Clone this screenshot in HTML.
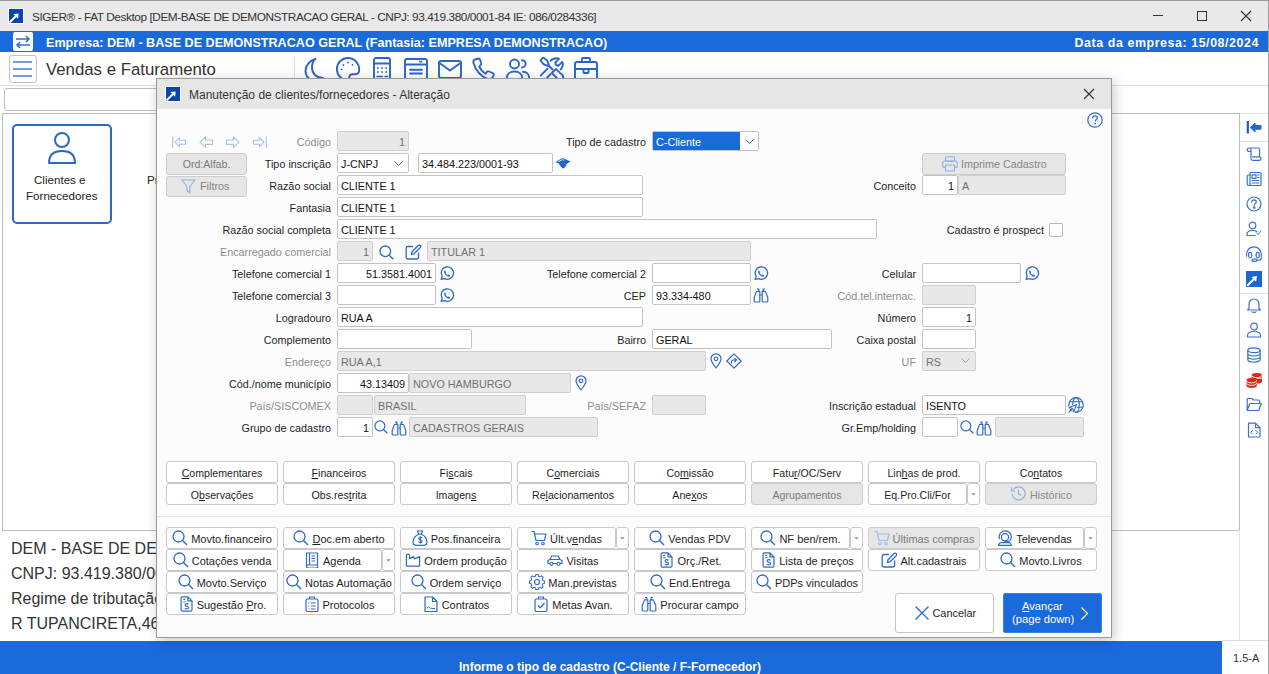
<!DOCTYPE html><html><head><meta charset="utf-8"><style>
*{box-sizing:border-box;margin:0;padding:0}
html,body{width:1269px;height:674px;overflow:hidden;background:#fff;font-family:"Liberation Sans",sans-serif;color:#222;position:relative}
div,svg{position:absolute}
.t{white-space:nowrap;line-height:1}
.ic{overflow:visible}
.inp{border:1px solid #c3c3c3;border-radius:2px;background:#fff;font-size:10.8px;line-height:20px;padding:0 3px;white-space:nowrap;overflow:hidden;color:#111}
.dis{background:#e8e8e8;color:#707070;border-color:#cfcfcf}
.r{text-align:right}
.lb{font-size:10.8px;white-space:nowrap;line-height:20px;height:20px;color:#1e1e1e}
.lbd{color:#8c8c8c}
.btn{border:1px solid #c9c9c9;border-radius:3px;background:#fff;font-size:10.6px;line-height:21px;text-align:center;white-space:nowrap;color:#1e1e1e}
.btng{background:#e6e6e6;color:#7a7a7a;border-color:#cdcdcd}

.gb{display:flex;align-items:center;justify-content:center;gap:3px;font-size:11px}
.gb span{position:relative;top:1.5px}
u{text-decoration:underline;text-underline-offset:1px}
</style></head><body><div class="" style="left:0px;top:0px;width:1269px;height:31px;background:#e9e9e9;border-top:1px solid #9c9c9c"></div>
<div class="" style="left:8px;top:8px;width:16px;height:16px;background:#0c43b0;border:1px solid #fff"></div>
<svg class="ic" style="left:8px;top:8px;" width="16" height="16" viewBox="0 0 16 16" fill="none"><path d="M1.5 14.5 L8 8" stroke="#fff" stroke-width="2"/><path d="M5.3 5.9 L10.6 5.4 L10.1 10.7 Z" fill="#fff"/></svg>
<div class="t" style="left:32px;top:11.6px;font-size:11.8px;color:#333;letter-spacing:-0.42px">SIGER® - FAT Desktop [DEM-BASE DE DEMONSTRACAO GERAL - CNPJ: 93.419.380/0001-84 IE: 086/0284336]</div>
<div class="" style="left:1153px;top:15px;width:10px;height:1px;background:#333"></div>
<div class="" style="left:1197px;top:11px;width:10px;height:10px;border:1px solid #333"></div>
<svg class="ic" style="left:1241px;top:11px;" width="10" height="10" viewBox="0 0 10 10" fill="none"><path d="M0 0 L10 10 M10 0 L0 10" stroke="#333" stroke-width="1.1"/></svg>
<div class="" style="left:0px;top:31px;width:1268px;height:21px;background:#1b6adc"></div>
<div class="" style="left:13px;top:32px;width:20px;height:19px;background:#fff;border-radius:2px"></div>
<svg class="ic" style="left:13px;top:32px;" width="20" height="20" viewBox="0 0 20 20" fill="none"><path d="M3 7 H16 M13 4 L16 7 L13 10 M17 13 H4 M7 10 L4 13 L7 16" stroke="#2f6fd0" stroke-width="1.5"/></svg>
<div class="t" style="left:46px;top:37px;font-size:12.6px;font-weight:bold;color:#fff">Empresa: DEM - BASE DE DEMONSTRACAO GERAL (Fantasia: EMPRESA DEMONSTRACAO)</div>
<div class="t" style="right:10px;top:37px;font-size:12.4px;font-weight:bold;color:#fff;letter-spacing:0.58px">Data da empresa: 15/08/2024</div>
<div class="" style="left:1268px;top:0px;width:1px;height:674px;background:#a0a0a0"></div>
<div class="" style="left:9px;top:55px;width:28px;height:28px;border:1px solid #c2c2c2;border-radius:3px;background:#fff"></div>
<svg class="ic" style="left:13px;top:61px;" width="20" height="16" viewBox="0 0 20 16" fill="none"><path d="M0 1 H19 M0 8 H19 M0 15 H19" stroke="#4b7dd0" stroke-width="1.6"/></svg>
<div class="t" style="left:46px;top:62px;font-size:16.8px;color:#333">Vendas e Faturamento</div>
<div class="" style="left:294px;top:56px;width:1px;height:22px;background:#dcdcdc"></div>
<div class="" style="left:0px;top:85px;width:1268px;height:1px;background:#dedede"></div>
<div class="" style="left:4px;top:88px;width:1000px;height:23px;border:1px solid #bdbdbd;border-radius:3px;background:#fff"></div>
<div class="" style="left:2px;top:113px;width:1238px;height:418px;border:1px solid #bdbdbd;background:#fff"></div>
<div class="" style="left:12px;top:124px;width:100px;height:100px;border:2px solid #2b67c9;border-radius:5px"></div>
<svg class="ic" style="left:44px;top:131px;" width="36" height="36" viewBox="0 0 36 36" fill="none"><circle cx="18" cy="9" r="7" stroke="#2b67c9" stroke-width="2"/><path d="M5 32 C5 24 10 20 18 20 C26 20 31 24 31 32 Z" stroke="#2b67c9" stroke-width="2" stroke-linejoin="round"/></svg>
<div class="t" style="left:34px;top:174px;font-size:11.6px;color:#222">Clientes e</div>
<div class="t" style="left:26px;top:190px;font-size:11.6px;color:#222">Fornecedores</div>
<div class="t" style="left:147px;top:174px;font-size:11.6px;color:#222">Produtos</div>
<div class="" style="left:1240px;top:113px;width:28px;height:528px;background:#fff"></div>
<div class="" style="left:1239px;top:530px;width:1px;height:111px;background:#e4e4e4"></div>
<div class="" style="left:1240px;top:113px;width:28px;height:1px;background:#e4e4e4"></div>
<div class="" style="left:1240px;top:141px;width:28px;height:1px;background:#e2e2e2"></div>
<div class="" style="left:1240px;top:293px;width:28px;height:1px;background:#e2e2e2"></div>
<div class="t" style="left:11px;top:541.0px;font-size:16px;color:#333">DEM - BASE DE DEMONSTRACAO GERAL</div>
<div class="t" style="left:11px;top:565.95px;font-size:16px;color:#333">CNPJ: 93.419.380/0001-84</div>
<div class="t" style="left:11px;top:590.9px;font-size:16px;color:#333">Regime de tributação: Lucro Presumido</div>
<div class="t" style="left:11px;top:615.85px;font-size:16px;color:#333">R TUPANCIRETA,46</div>
<div class="" style="left:0px;top:641px;width:1222px;height:33px;background:#1b6adc"></div>
<div class="t" style="left:459px;top:661px;font-size:12px;font-weight:bold;color:#fff">Informe o tipo de cadastro (C-Cliente / F-Fornecedor)</div>
<div class="" style="left:1222px;top:640px;width:46px;height:34px;border-top:1px solid #dcdcdc;background:#fff"></div>
<div class="t" style="left:1233px;top:653px;font-size:11px;color:#333">1.5-A</div>
<svg class="ic" style="left:304px;top:57px" width="24" height="24" viewBox="0 0 24 24" fill="none" stroke="#2c65c8" stroke-width="1.9" stroke-linejoin="round" stroke-linecap="round"><path d="M11.5 2 C6 3.5 1.5 8 1.5 14 C1.5 20 6.5 24.5 12 24.5 C15.5 24.5 18 23 19 21 C12.5 21 8 16.5 8 10.5 C8 6.5 9.5 3.5 11.5 2 Z"/></svg>
<svg class="ic" style="left:336px;top:57px" width="24" height="24" viewBox="0 0 24 24" fill="none" stroke="#2c65c8" stroke-width="1.9" stroke-linejoin="round" stroke-linecap="round"><path d="M12 1 C5.8 1 0.9 5.8 0.9 12 C0.9 18 5.5 23 11 23.5 C12.8 23.6 13.2 22.4 13.2 20.8 C13.2 18.6 14.3 17.2 16.6 17.2 H19.4 C21.9 17.2 23.2 15.6 23.2 12.8 C23.2 6.2 18.2 1 12 1 Z"/><circle cx="12" cy="5.5" r="0.9" fill="#2c65c8" stroke="none"/><circle cx="7.4" cy="7.9" r="0.9" fill="#2c65c8" stroke="none"/><circle cx="16.5" cy="7.9" r="0.9" fill="#2c65c8" stroke="none"/><circle cx="5.7" cy="12.3" r="0.9" fill="#2c65c8" stroke="none"/></svg>
<svg class="ic" style="left:373px;top:57px" width="18" height="24" viewBox="0 0 18 24" fill="none" stroke="#2c65c8" stroke-width="1.9" stroke-linejoin="round" stroke-linecap="round"><rect x="1" y="1" width="16" height="23" rx="2"/><path d="M1 6.5 H17"/><g fill="#2c65c8" stroke="none"><circle cx="4.8" cy="11" r="0.9"/><circle cx="9" cy="11" r="0.9"/><circle cx="13.2" cy="11" r="0.9"/><circle cx="4.8" cy="15" r="0.9"/><circle cx="9" cy="15" r="0.9"/><circle cx="13.2" cy="15" r="0.9"/></g><path d="M4 19.5 H9.5 M12 19.5 H14.5" stroke-width="1.5"/></svg>
<svg class="ic" style="left:404px;top:57px" width="24" height="24" viewBox="0 0 24 24" fill="none" stroke="#2c65c8" stroke-width="1.9" stroke-linejoin="round" stroke-linecap="round"><rect x="1" y="2" width="22" height="21" rx="2"/><path d="M1 7.5 H23 M6 12.8 H18 M6 16.5 H18"/><path d="M15.5 4.2 L16.8 5.2 L18 4.2" stroke-width="1.3"/></svg>
<svg class="ic" style="left:438px;top:57px" width="24" height="24" viewBox="0 0 24 24" fill="none" stroke="#2c65c8" stroke-width="1.9" stroke-linejoin="round" stroke-linecap="round"><rect x="1" y="4" width="22" height="17" rx="2"/><path d="M1.5 6 L12 13.5 L22.5 6"/></svg>
<svg class="ic" style="left:472px;top:57px" width="24" height="24" viewBox="0 0 24 24" fill="none" stroke="#2c65c8" stroke-width="1.9" stroke-linejoin="round" stroke-linecap="round"><path d="M6.5 1.5 L3 2.5 C1.5 3 1 4.5 1.5 6 C3.5 13 9 19.5 16.5 22.5 C18 23 19.5 22.5 20 21 L21.5 18.5 C22 17.5 21.5 16.5 20.5 16 L17 14.5 C16 14 15 14.5 14.5 15.5 L13.5 16.8 C10.5 15 8.5 12.5 7.2 9.5 L8.5 8.3 C9.3 7.5 9.5 6.5 9 5.5 L8 2.5 C7.7 1.8 7.2 1.4 6.5 1.5 Z"/></svg>
<svg class="ic" style="left:506px;top:57px" width="24" height="24" viewBox="0 0 24 24" fill="none" stroke="#2c65c8" stroke-width="1.9" stroke-linejoin="round" stroke-linecap="round"><circle cx="8.5" cy="7" r="4.5"/><path d="M16 3.2 A3.6 3.6 0 1 1 16 10.5"/><path d="M1 22 V20.5 C1 17 4 14.5 8.5 14.5 C13 14.5 16 17 16 20.5 V22 Z"/><path d="M17 14.8 C20.5 15 23 17.3 23 20.5 V22 H19"/></svg>
<svg class="ic" style="left:540px;top:57px" width="24" height="24" viewBox="0 0 24 24" fill="none" stroke="#2c65c8" stroke-width="1.9" stroke-linejoin="round" stroke-linecap="round"><path d="M0.8 2.8 L2.8 0.8 Q3.3 0.4 4 0.9 L7.2 3.5 L8.8 7.6 L7.6 8.8 L3.5 7.2 L0.9 4 Q0.4 3.3 0.8 2.8 Z"/><path d="M8.5 8.5 L12.5 12.5"/><path d="M11.8 16 L16 11.8 L22.6 18.4 A3 3 0 0 1 18.4 22.6 Z"/><path d="M10.6 3.8 C12.5 1.6 17 0.6 19 1.8 L15.3 5.5 C15.3 7.5 16.5 8.7 18.5 8.7 L22.3 4.9 C23.5 7 22.6 10.8 20.6 12.4"/><path d="M7.6 11.6 L0.8 18.4 M10.6 17.1 L7.2 20.5"/></svg>
<svg class="ic" style="left:574px;top:57px" width="24" height="24" viewBox="0 0 24 24" fill="none" stroke="#2c65c8" stroke-width="1.9" stroke-linejoin="round" stroke-linecap="round"><rect x="1" y="5" width="22" height="18" rx="2"/><path d="M8 5 V2 A1 1 0 0 1 9 1 H15 A1 1 0 0 1 16 2 V5 M1 12 H23"/><rect x="9.5" y="12" width="5" height="4" rx="0.5"/></svg>
<svg class="ic" style="left:1246px;top:120px" width="16" height="15" viewBox="0 0 16 15" fill="none" stroke="#3a70cc" stroke-width="1.2" stroke-linejoin="round" stroke-linecap="round"><path d="M1.8 1 V13.5" stroke="#1f5bc4" stroke-width="2.2" stroke-linecap="butt"/><path d="M4.5 7.3 L9 3 V5.5 H15 V9.2 H9 V11.6 Z" fill="#2166d4" stroke="#2166d4" stroke-width="1"/></svg>
<svg class="ic" style="left:1246px;top:146px" width="16" height="16" viewBox="0 0 16 16" fill="none" stroke="#3a70cc" stroke-width="1.2" stroke-linejoin="round" stroke-linecap="round"><path d="M3.5 2 H12 C13 2 13.5 2.7 13.5 3.5 V10.5 M3.5 2 C2 2 1.2 2.8 1.2 3.8 C1.2 4.8 2 5.5 3.5 5.5 H5 V12.5 C5 13.5 5.8 14.3 6.8 14.3 H13.5 C14.5 14.3 15 13.5 15 12.6 C15 11.6 14.5 10.8 13.5 10.8 H6.5 M3.5 2 C4.5 2 5 2.8 5 3.8 V5.5"/></svg>
<svg class="ic" style="left:1246px;top:171px" width="16" height="16" viewBox="0 0 16 16" fill="none" stroke="#3a70cc" stroke-width="1.2" stroke-linejoin="round" stroke-linecap="round"><rect x="4" y="1.5" width="11" height="13" rx="1"/><path d="M4 4 H2.5 C1.7 4 1.2 4.5 1.2 5.3 V13 C1.2 13.9 1.9 14.5 2.7 14.5 H5"/><rect x="6" y="3.8" width="4" height="3.5"/><path d="M11.5 4 H13 M11.5 6.5 H13 M6 9.5 H13 M6 12 H13"/></svg>
<svg class="ic" style="left:1246px;top:196px" width="16" height="16" viewBox="0 0 16 16" fill="none" stroke="#3a70cc" stroke-width="1.2" stroke-linejoin="round" stroke-linecap="round"><circle cx="8" cy="8" r="7"/><path d="M5.7 6.2 C5.7 4.7 6.8 3.9 8 3.9 C9.3 3.9 10.3 4.8 10.3 6 C10.3 7.4 8.2 7.6 8.2 9.3"/><circle cx="8.2" cy="11.6" r="0.7" fill="#3a70cc"/></svg>
<svg class="ic" style="left:1246px;top:221px" width="16" height="16" viewBox="0 0 16 16" fill="none" stroke="#3a70cc" stroke-width="1.2" stroke-linejoin="round" stroke-linecap="round"><circle cx="6.5" cy="4.5" r="3.3"/><path d="M1 14.5 V13.5 C1 11 3 9.5 6.5 9.5 C8.5 9.5 10 10 11 10.8 M1 14.5 H9"/><path d="M10.5 12 L12 13.5 L15 10" stroke-width="1"/></svg>
<svg class="ic" style="left:1246px;top:246px" width="16" height="16" viewBox="0 0 16 16" fill="none" stroke="#3a70cc" stroke-width="1.2" stroke-linejoin="round" stroke-linecap="round"><path d="M0.6 10.2 V8.2 A7.2 7.2 0 0 1 15.2 8.2 V12.2 Q15.2 14.2 13.6 14.2 H10.8"/><rect x="2.6" y="6.3" width="3" height="5.5" rx="1.5"/><rect x="10.2" y="6.3" width="3" height="5.5" rx="1.5"/><rect x="6" y="13.1" width="4.8" height="2.2" rx="1.1"/></svg>
<div style="left:1246px;top:271px;width:16px;height:16px;background:#1d64d6"></div>
<svg class="ic" style="left:1246px;top:271px" width="16" height="16" viewBox="0 0 16 16" fill="none" stroke="#3a70cc" stroke-width="1.2" stroke-linejoin="round" stroke-linecap="round"><path d="M1.2 14.8 L8 8" stroke="#fff" stroke-width="2" stroke-linecap="butt"/><path d="M5.3 5.9 L11 5 L10.1 10.7 Z" fill="#fff" stroke="none"/></svg>
<svg class="ic" style="left:1246px;top:297px" width="16" height="16" viewBox="0 0 16 16" fill="none" stroke="#3a70cc" stroke-width="1.2" stroke-linejoin="round" stroke-linecap="round"><path d="M3 11.5 V7 A5 5 0 0 1 13 7 V11.5 L14.5 13 H1.5 Z"/><path d="M6 14.8 C6.5 15.6 9.5 15.6 10 14.8"/></svg>
<svg class="ic" style="left:1246px;top:322px" width="16" height="16" viewBox="0 0 16 16" fill="none" stroke="#3a70cc" stroke-width="1.2" stroke-linejoin="round" stroke-linecap="round"><circle cx="8" cy="4.5" r="3.3"/><path d="M1.5 15 V13.8 C1.5 11.3 4 9.5 8 9.5 C12 9.5 14.5 11.3 14.5 13.8 V15 Z"/></svg>
<svg class="ic" style="left:1246px;top:347px" width="16" height="16" viewBox="0 0 16 16" fill="none" stroke="#3a70cc" stroke-width="1.2" stroke-linejoin="round" stroke-linecap="round"><ellipse cx="8" cy="3.3" rx="6.2" ry="2.4"/><path d="M1.8 3.3 V12.7 C1.8 14 4.6 15.1 8 15.1 C11.4 15.1 14.2 14 14.2 12.7 V3.3 M1.8 6.6 C1.8 7.9 4.6 9 8 9 C11.4 9 14.2 7.9 14.2 6.6 M1.8 9.8 C1.8 11.1 4.6 12.2 8 12.2 C11.4 12.2 14.2 11.1 14.2 9.8"/></svg>
<svg class="ic" style="left:1246px;top:371px" width="16" height="17" viewBox="0 0 16 17" fill="none" stroke="#3a70cc" stroke-width="1.2" stroke-linejoin="round" stroke-linecap="round"><g stroke="none" fill="#d42a1e"><path d="M5.6 4.2 A5.2 2.3 0 0 1 16 4.2 V10.2 A5.2 2.3 0 0 1 5.6 10.2 Z"/><path d="M0.4 9.4 A5.2 2.3 0 0 1 10.8 9.4 V14.6 A5.2 2.3 0 0 1 0.4 14.6 Z"/></g><g stroke="#fff" stroke-width="0.9" fill="none"><path d="M5.6 4.4 A5.2 2.3 0 0 0 16 4.4 M10.8 7.2 A5.2 2.3 0 0 0 16 7.1 M0.4 9.6 A5.2 2.3 0 0 0 10.8 9.6 M0.4 12.1 A5.2 2.3 0 0 0 10.8 12.1"/><path d="M10.2 7.6 A5.2 2.3 0 0 0 5.6 7.2" stroke="none"/></g></svg>
<svg class="ic" style="left:1246px;top:397px" width="16" height="15" viewBox="0 0 16 15" fill="none" stroke="#3a70cc" stroke-width="1.2" stroke-linejoin="round" stroke-linecap="round"><path d="M1.2 13.5 V2.5 C1.2 1.9 1.6 1.5 2.2 1.5 H6 L7.5 3 H12.5 C13.1 3 13.5 3.4 13.5 4 V6 M1.2 13.5 L3.8 6.5 H15.3 L12.8 13.5 Z"/></svg>
<svg class="ic" style="left:1246px;top:422px" width="16" height="16" viewBox="0 0 16 16" fill="none" stroke="#3a70cc" stroke-width="1.2" stroke-linejoin="round" stroke-linecap="round"><path d="M2.5 1.2 H9.5 L14 5.7 V15 H2.5 Z M9.5 1.2 V5.7 H14"/><path d="M6.5 8.5 L4.8 10.3 L6.5 12 M10 8.5 L11.7 10.3 L10 12" stroke-width="1"/></svg>
<div class="" style="left:156px;top:78px;width:956px;height:560px;border:1px solid #9a9a9a;background:#fcfcfc;box-shadow:2px 3px 12px rgba(0,0,0,0.22)"></div>
<div class="" style="left:157px;top:79px;width:954px;height:30px;background:#e6e6e6"></div>
<div class="" style="left:165px;top:86px;width:16px;height:16px;background:#0c43b0;border:1px solid #fff"></div>
<svg class="ic" style="left:165px;top:86px;" width="16" height="16" viewBox="0 0 16 16" fill="none"><path d="M1.5 14.5 L8 8" stroke="#fff" stroke-width="2"/><path d="M5.3 5.9 L10.6 5.4 L10.1 10.7 Z" fill="#fff"/></svg>
<div class="t" style="left:189px;top:89px;font-size:12px;color:#333">Manutenção de clientes/fornecedores - Alteração</div>
<svg class="ic" style="left:1084px;top:89px;" width="10" height="10" viewBox="0 0 10 10" fill="none"><path d="M0 0 L10 10 M10 0 L0 10" stroke="#333" stroke-width="1.1"/></svg>
<svg class="ic" style="left:1087px;top:112px;" width="16" height="16" viewBox="0 0 16 16" fill="none"><circle cx="8" cy="8" r="7.2" stroke="#2f69c9" stroke-width="1.2"/><path d="M5.6 6.2 C5.6 4.6 6.7 3.8 8 3.8 C9.4 3.8 10.4 4.7 10.4 5.9 C10.4 7.4 8.2 7.6 8.2 9.4" stroke="#2f69c9" stroke-width="1.3"/><circle cx="8.2" cy="11.6" r="0.9" fill="#2f69c9"/></svg>
<svg class="ic" style="left:172px;top:136px;" width="14" height="12" viewBox="0 0 14 12" fill="none"><path d="M0.7 0.5 V12" stroke="#a9c1e6" stroke-width="1.1"/><path d="M3 6.2 L7.5 1.8 V4.2 H13.5 V8.2 H7.5 V10.6 Z" stroke="#a9c1e6" stroke-width="1.1" stroke-linejoin="round"/></svg>
<svg class="ic" style="left:199px;top:136px;" width="14" height="12" viewBox="0 0 14 12" fill="none"><path d="M1 6.2 L6.5 1 V4 H13.5 V8.4 H6.5 V11.4 Z" stroke="#a9c1e6" stroke-width="1.1" stroke-linejoin="round"/></svg>
<svg class="ic" style="left:226px;top:136px;" width="14" height="12" viewBox="0 0 14 12" fill="none"><path d="M13 6.2 L7.5 1 V4 H0.5 V8.4 H7.5 V11.4 Z" stroke="#a9c1e6" stroke-width="1.1" stroke-linejoin="round"/></svg>
<svg class="ic" style="left:253px;top:136px;" width="14" height="12" viewBox="0 0 14 12" fill="none"><path d="M13.3 0.5 V12" stroke="#a9c1e6" stroke-width="1.1"/><path d="M11 6.2 L6.5 1.8 V4.2 H0.5 V8.2 H6.5 V10.6 Z" stroke="#a9c1e6" stroke-width="1.1" stroke-linejoin="round"/></svg>
<div class="lb lbd" style="right:938px;top:132px">Código</div>
<div class="inp dis r" style="left:337px;top:131px;width:72px;height:20px;">1</div>
<div class="lb" style="right:623px;top:132px">Tipo de cadastro</div>
<div class="inp" style="left:652px;top:131px;width:107px;height:20px;padding:0"></div>
<div class="" style="left:653px;top:132px;width:87px;height:18px;background:#1b6adc;color:#fff;font-size:10.8px;line-height:20px;padding-left:3px">C-Cliente</div>
<svg class="ic" style="left:745px;top:139px;" width="9" height="5" viewBox="0 0 9 5" fill="none"><path d="M0.5 0.5 L4.5 4.5 L8.5 0.5" stroke="#555" stroke-width="1"/></svg>
<div class="lb" style="right:938px;top:154px">Tipo inscrição</div>
<div class="inp" style="left:337px;top:153px;width:72px;height:20px;">J-CNPJ</div>
<svg class="ic" style="left:394px;top:161px;" width="9" height="5" viewBox="0 0 9 5" fill="none"><path d="M0.5 0.5 L4.5 4.5 L8.5 0.5" stroke="#555" stroke-width="1"/></svg>
<div class="inp" style="left:418px;top:153px;width:135px;height:20px;">34.484.223/0001-93</div>
<svg class="ic" style="left:555px;top:157px;" width="16" height="12" viewBox="0 0 16 12" fill="none"><path d="M0.5 5 L6.5 1.5 Q7.5 0.8 8.8 1.4 L15.5 4.6 L10.8 7.4 L7.8 5.8 L5.2 7.2 Z" fill="#1d60d2"/><path d="M4 7.2 L7.8 5.8 L11.8 8 L8.8 11.2 Q8 11.6 7.2 11 Z" fill="#1d60d2"/><path d="M3.2 4.6 L7.6 2.6 L9.2 3.4" stroke="#fff" stroke-width="0.9"/></svg>
<div class="btn btng" style="left:922px;top:153px;width:144px;height:22px;"></div>
<svg class="ic" style="left:942px;top:156px;" width="16" height="16" viewBox="0 0 16 16" fill="none"><rect x="3.5" y="0.8" width="9" height="4.5" rx="1" stroke="#8fb0e0" stroke-width="1.1"/><rect x="0.8" y="5" width="14.4" height="6.5" rx="1.3" stroke="#8fb0e0" stroke-width="1.1"/><rect x="3.5" y="9" width="9" height="6" rx="0.8" stroke="#8fb0e0" stroke-width="1.1" fill="#e6e6e6"/></svg>
<div class="t" style="left:961px;top:159px;font-size:10.8px;color:#858585">Imprime Cadastro</div>
<div class="btn btng" style="left:166px;top:153px;width:81px;height:22px;">Ord:Alfab.</div>
<div class="btn btng" style="left:166px;top:176px;width:81px;height:21px;"></div>
<svg class="ic" style="left:181px;top:179px;" width="15" height="15" viewBox="0 0 15 15" fill="none"><path d="M0.8 1 H14 L8.8 7.5 V14 L6 11.8 V7.5 Z" stroke="#8fb0e0" stroke-width="1.1" stroke-linejoin="round"/></svg>
<div class="t" style="left:200px;top:181px;font-size:10.8px;color:#858585">Filtros</div>
<div class="lb" style="right:938px;top:176px">Razão social</div>
<div class="inp" style="left:337px;top:175px;width:306px;height:20px;">CLIENTE 1</div>
<div class="lb" style="right:353px;top:176px">Conceito</div>
<div class="inp r" style="left:922px;top:175px;width:36px;height:20px;">1</div>
<div class="inp dis" style="left:958px;top:175px;width:108px;height:20px;">A</div>
<div class="lb" style="right:938px;top:198px">Fantasia</div>
<div class="inp" style="left:337px;top:197px;width:306px;height:20px;">CLIENTE 1</div>
<div class="lb" style="right:938px;top:220px">Razão social completa</div>
<div class="inp" style="left:337px;top:219px;width:540px;height:20px;">CLIENTE 1</div>
<div class="lb" style="right:225px;top:220px">Cadastro é prospect</div>
<div class="" style="left:1049px;top:223px;width:14px;height:14px;border:1px solid #b9b9b9;border-radius:2px;background:#fff"></div>
<div class="lb lbd" style="right:938px;top:242px">Encarregado comercial</div>
<div class="inp dis r" style="left:337px;top:241px;width:36px;height:20px;">1</div>
<svg class="ic" style="left:379px;top:245px;" width="15" height="15" viewBox="0 0 15 15" fill="none"><circle cx="6.3" cy="6.3" r="5.3" stroke="#2f69c9" stroke-width="1.3"/><path d="M10.2 10.2 L14.3 14.3" stroke="#2f69c9" stroke-width="1.4"/></svg>
<svg class="ic" style="left:405px;top:244px;" width="17" height="16" viewBox="0 0 17 16" fill="none"><path d="M8 2.5 H3 A1.8 1.8 0 0 0 1.2 4.3 V13.2 A1.8 1.8 0 0 0 3 15 H11.8 A1.8 1.8 0 0 0 13.6 13.2 V8.5" stroke="#2f69c9" stroke-width="1.3"/><path d="M6.5 10.3 L7 7.7 L13.2 1.5 A1.3 1.3 0 0 1 15.3 3.6 L9.1 9.8 Z" stroke="#2f69c9" stroke-width="1.3" stroke-linejoin="round"/></svg>
<div class="inp dis" style="left:427px;top:241px;width:324px;height:20px;">TITULAR 1</div>
<div class="lb" style="right:938px;top:264px">Telefone comercial 1</div>
<div class="inp r" style="left:337px;top:263px;width:99px;height:20px;">51.3581.4001</div>
<svg class="ic" style="left:439px;top:266px;" width="15" height="15" viewBox="0 0 15 15" fill="none"><path d="M2.2 13.3 L3.1 10.3 A6.2 6.2 0 1 1 5.6 12.6 Z" stroke="#2f69c9" stroke-width="1.3" stroke-linejoin="round"/><path d="M5.3 4.8 C5.6 4.2 6.4 4.3 6.6 5 L7 6 C7.1 6.4 6.6 6.8 6.7 7.1 C7.1 7.9 7.8 8.5 8.6 8.9 C8.9 9 9.3 8.5 9.6 8.6 L10.6 9.1 C11.2 9.4 11.2 10.1 10.6 10.5 C9.3 11.5 4.2 8.2 5.3 4.8 Z" fill="#2f69c9"/></svg>
<div class="lb" style="right:623px;top:264px">Telefone comercial 2</div>
<div class="inp" style="left:652px;top:263px;width:99px;height:20px;"></div>
<svg class="ic" style="left:753px;top:266px;" width="15" height="15" viewBox="0 0 15 15" fill="none"><path d="M2.2 13.3 L3.1 10.3 A6.2 6.2 0 1 1 5.6 12.6 Z" stroke="#2f69c9" stroke-width="1.3" stroke-linejoin="round"/><path d="M5.3 4.8 C5.6 4.2 6.4 4.3 6.6 5 L7 6 C7.1 6.4 6.6 6.8 6.7 7.1 C7.1 7.9 7.8 8.5 8.6 8.9 C8.9 9 9.3 8.5 9.6 8.6 L10.6 9.1 C11.2 9.4 11.2 10.1 10.6 10.5 C9.3 11.5 4.2 8.2 5.3 4.8 Z" fill="#2f69c9"/></svg>
<div class="lb" style="right:353px;top:264px">Celular</div>
<div class="inp" style="left:922px;top:263px;width:99px;height:20px;"></div>
<svg class="ic" style="left:1024px;top:266px;" width="15" height="15" viewBox="0 0 15 15" fill="none"><path d="M2.2 13.3 L3.1 10.3 A6.2 6.2 0 1 1 5.6 12.6 Z" stroke="#2f69c9" stroke-width="1.3" stroke-linejoin="round"/><path d="M5.3 4.8 C5.6 4.2 6.4 4.3 6.6 5 L7 6 C7.1 6.4 6.6 6.8 6.7 7.1 C7.1 7.9 7.8 8.5 8.6 8.9 C8.9 9 9.3 8.5 9.6 8.6 L10.6 9.1 C11.2 9.4 11.2 10.1 10.6 10.5 C9.3 11.5 4.2 8.2 5.3 4.8 Z" fill="#2f69c9"/></svg>
<div class="lb" style="right:938px;top:286px">Telefone comercial 3</div>
<div class="inp" style="left:337px;top:285px;width:99px;height:20px;"></div>
<svg class="ic" style="left:439px;top:288px;" width="15" height="15" viewBox="0 0 15 15" fill="none"><path d="M2.2 13.3 L3.1 10.3 A6.2 6.2 0 1 1 5.6 12.6 Z" stroke="#2f69c9" stroke-width="1.3" stroke-linejoin="round"/><path d="M5.3 4.8 C5.6 4.2 6.4 4.3 6.6 5 L7 6 C7.1 6.4 6.6 6.8 6.7 7.1 C7.1 7.9 7.8 8.5 8.6 8.9 C8.9 9 9.3 8.5 9.6 8.6 L10.6 9.1 C11.2 9.4 11.2 10.1 10.6 10.5 C9.3 11.5 4.2 8.2 5.3 4.8 Z" fill="#2f69c9"/></svg>
<div class="lb" style="right:623px;top:286px">CEP</div>
<div class="inp" style="left:652px;top:285px;width:99px;height:20px;">93.334-480</div>
<svg class="ic" style="left:753px;top:288px;" width="16" height="15" viewBox="0 0 16 15" fill="none"><path d="M4 1 H5.8 V3.2 M10.2 3.2 V1 H12" stroke="#2f69c9" stroke-width="1.2"/><path d="M3.6 3.4 H6.8 V13.2 Q6.8 14 6 14 H2 Q1.2 14 1.2 13.2 V9.5 Z M12.4 3.4 H9.2 V13.2 Q9.2 14 10 14 H14 Q14.8 14 14.8 13.2 V9.5 Z M6.8 7 H9.2" stroke="#2f69c9" stroke-width="1.2" stroke-linejoin="round"/></svg>
<div class="lb lbd" style="right:353px;top:286px">Cód.tel.internac.</div>
<div class="inp dis" style="left:922px;top:285px;width:54px;height:20px;"></div>
<div class="lb" style="right:938px;top:308px">Logradouro</div>
<div class="inp" style="left:337px;top:307px;width:306px;height:20px;">RUA A</div>
<div class="lb" style="right:353px;top:308px">Número</div>
<div class="inp r" style="left:922px;top:307px;width:54px;height:20px;">1</div>
<div class="lb" style="right:938px;top:330px">Complemento</div>
<div class="inp" style="left:337px;top:329px;width:135px;height:20px;"></div>
<div class="lb" style="right:623px;top:330px">Bairro</div>
<div class="inp" style="left:652px;top:329px;width:180px;height:20px;">GERAL</div>
<div class="lb" style="right:353px;top:330px">Caixa postal</div>
<div class="inp" style="left:922px;top:329px;width:54px;height:20px;"></div>
<div class="lb lbd" style="right:938px;top:352px">Endereço</div>
<div class="inp dis" style="left:337px;top:351px;width:369px;height:20px;">RUA A,1</div>
<svg class="ic" style="left:710px;top:353px;" width="12" height="16" viewBox="0 0 12 16" fill="none"><path d="M6 15 C2.5 10.5 1 8 1 5.8 A5 5 0 0 1 11 5.8 C11 8 9.5 10.5 6 15 Z" stroke="#2f69c9" stroke-width="1.2" stroke-linejoin="round"/><circle cx="6" cy="5.8" r="1.8" stroke="#2f69c9" stroke-width="1.2"/></svg>
<svg class="ic" style="left:726px;top:353px;" width="16" height="16" viewBox="0 0 16 16" fill="none"><path d="M8 0.8 L15.2 8 L8 15.2 L0.8 8 Z" stroke="#2f69c9" stroke-width="1.2" stroke-linejoin="round"/><path d="M5.5 10.5 V8.5 C5.5 7.5 6.2 7 7.2 7 H10 M8.5 5.3 L10.3 7 L8.5 8.7" stroke="#2f69c9" stroke-width="1.2"/></svg>
<div class="lb lbd" style="right:353px;top:352px">UF</div>
<div class="inp dis" style="left:922px;top:351px;width:54px;height:20px;">RS</div>
<svg class="ic" style="left:961px;top:358px;" width="9" height="5" viewBox="0 0 9 5" fill="none"><path d="M0.5 0.5 L4.5 4.5 L8.5 0.5" stroke="#a0a0a0" stroke-width="1"/></svg>
<div class="lb" style="right:938px;top:374px">Cód./nome município</div>
<div class="inp r" style="left:337px;top:373px;width:72px;height:20px;">43.13409</div>
<div class="inp dis" style="left:409px;top:373px;width:162px;height:20px;">NOVO HAMBURGO</div>
<svg class="ic" style="left:575px;top:375px;" width="12" height="16" viewBox="0 0 12 16" fill="none"><path d="M6 15 C2.5 10.5 1 8 1 5.8 A5 5 0 0 1 11 5.8 C11 8 9.5 10.5 6 15 Z" stroke="#2f69c9" stroke-width="1.2" stroke-linejoin="round"/><circle cx="6" cy="5.8" r="1.8" stroke="#2f69c9" stroke-width="1.2"/></svg>
<div class="lb lbd" style="right:938px;top:396px">País/SISCOMEX</div>
<div class="inp dis" style="left:337px;top:395px;width:36px;height:20px;"></div>
<div class="inp dis" style="left:374px;top:395px;width:152px;height:20px;">BRASIL</div>
<div class="lb lbd" style="right:623px;top:396px">País/SEFAZ</div>
<div class="inp dis" style="left:652px;top:395px;width:54px;height:20px;"></div>
<div class="lb" style="right:353px;top:396px">Inscrição estadual</div>
<div class="inp" style="left:922px;top:395px;width:144px;height:20px;">ISENTO</div>
<svg class="ic" style="left:1068px;top:397px;" width="16" height="16" viewBox="0 0 16 16" fill="none"><circle cx="8" cy="8" r="7.3" stroke="#2f69c9" stroke-width="1.2"/><ellipse cx="8" cy="8" rx="3.3" ry="7.3" stroke="#2f69c9" stroke-width="1.1"/><path d="M1.2 4.8 H14.8 M1.2 10.2 H14.8" stroke="#2f69c9" stroke-width="1.1"/><path d="M8.6 7.6 L1.5 10.3 L4.6 11.4 L5.9 14.6 Z" fill="#fff" stroke="#fff" stroke-width="2.2" stroke-linejoin="round"/><path d="M8.6 7.6 L1.5 10.3 L4.6 11.4 L5.9 14.6 Z" fill="#fff" stroke="#2f69c9" stroke-width="1.1" stroke-linejoin="round"/><path d="M4.4 11.6 L0.6 15.4" stroke="#2f69c9" stroke-width="1.1"/></svg>
<div class="lb" style="right:938px;top:418px">Grupo de cadastro</div>
<div class="inp r" style="left:337px;top:417px;width:36px;height:20px;">1</div>
<svg class="ic" style="left:374px;top:420px;" width="14" height="14" viewBox="0 0 15 15" fill="none"><circle cx="6.3" cy="6.3" r="5.3" stroke="#2f69c9" stroke-width="1.3"/><path d="M10.2 10.2 L14.3 14.3" stroke="#2f69c9" stroke-width="1.4"/></svg>
<svg class="ic" style="left:391px;top:421px;" width="16" height="15" viewBox="0 0 16 15" fill="none"><path d="M4 1 H5.8 V3.2 M10.2 3.2 V1 H12" stroke="#2f69c9" stroke-width="1.2"/><path d="M3.6 3.4 H6.8 V13.2 Q6.8 14 6 14 H2 Q1.2 14 1.2 13.2 V9.5 Z M12.4 3.4 H9.2 V13.2 Q9.2 14 10 14 H14 Q14.8 14 14.8 13.2 V9.5 Z M6.8 7 H9.2" stroke="#2f69c9" stroke-width="1.2" stroke-linejoin="round"/></svg>
<div class="inp dis" style="left:409px;top:417px;width:189px;height:20px;">CADASTROS GERAIS</div>
<div class="lb" style="right:353px;top:418px">Gr.Emp/holding</div>
<div class="inp" style="left:922px;top:417px;width:36px;height:20px;"></div>
<svg class="ic" style="left:960px;top:420px;" width="14" height="14" viewBox="0 0 15 15" fill="none"><circle cx="6.3" cy="6.3" r="5.3" stroke="#2f69c9" stroke-width="1.3"/><path d="M10.2 10.2 L14.3 14.3" stroke="#2f69c9" stroke-width="1.4"/></svg>
<svg class="ic" style="left:976px;top:421px;" width="16" height="15" viewBox="0 0 16 15" fill="none"><path d="M4 1 H5.8 V3.2 M10.2 3.2 V1 H12" stroke="#2f69c9" stroke-width="1.2"/><path d="M3.6 3.4 H6.8 V13.2 Q6.8 14 6 14 H2 Q1.2 14 1.2 13.2 V9.5 Z M12.4 3.4 H9.2 V13.2 Q9.2 14 10 14 H14 Q14.8 14 14.8 13.2 V9.5 Z M6.8 7 H9.2" stroke="#2f69c9" stroke-width="1.2" stroke-linejoin="round"/></svg>
<div class="inp dis" style="left:995px;top:417px;width:89px;height:20px;"></div>
<div class="btn" style="left:166px;top:461px;width:112px;height:22px;line-height:23px"><u>C</u>omplementares</div>
<div class="btn" style="left:283px;top:461px;width:112px;height:22px;line-height:23px"><u>F</u>inanceiros</div>
<div class="btn" style="left:400px;top:461px;width:112px;height:22px;line-height:23px">Fi<u>s</u>cais</div>
<div class="btn" style="left:517px;top:461px;width:112px;height:22px;line-height:23px">C<u>o</u>merciais</div>
<div class="btn" style="left:634px;top:461px;width:112px;height:22px;line-height:23px">Co<u>m</u>issão</div>
<div class="btn" style="left:751px;top:461px;width:112px;height:22px;line-height:23px">Fatu<u>r</u>/OC/Serv</div>
<div class="btn" style="left:868px;top:461px;width:112px;height:22px;line-height:23px">Lin<u>h</u>as de prod.</div>
<div class="btn" style="left:985px;top:461px;width:112px;height:22px;line-height:23px">Co<u>n</u>tatos</div>
<div class="btn" style="left:166px;top:483px;width:112px;height:22px;line-height:23px">O<u>b</u>servações</div>
<div class="btn" style="left:283px;top:483px;width:112px;height:22px;line-height:23px">Obs.res<u>t</u>rita</div>
<div class="btn" style="left:400px;top:483px;width:112px;height:22px;line-height:23px">Imagen<u>s</u></div>
<div class="btn" style="left:517px;top:483px;width:112px;height:22px;line-height:23px">Re<u>l</u>acionamentos</div>
<div class="btn" style="left:634px;top:483px;width:112px;height:22px;line-height:23px">Ane<u>x</u>os</div>
<div class="btn btng" style="left:751px;top:483px;width:112px;height:22px;line-height:23px">Agrupamentos</div>
<div class="btn" style="left:868px;top:483px;width:99px;height:22px;line-height:23px">Eq.Pro.Cli/For</div>
<div class="btn" style="left:967px;top:483px;width:13px;height:22px;"></div>
<svg class="ic" style="left:971px;top:493px;" width="5" height="3" viewBox="0 0 5 3" fill="none"><path d="M0.3 0.3 L2.5 2.6 L4.7 0.3 Z" fill="#6f8fc8"/></svg>
<div class="btn btng" style="left:985px;top:483px;width:112px;height:22px;"></div>
<svg class="ic" style="left:1010px;top:485px;" width="17" height="17" viewBox="0 0 17 17" fill="none"><path d="M3.5 4.5 A6.5 6.5 0 1 1 2.2 9" stroke="#8fb0e0" stroke-width="1.2"/><path d="M1.5 2.5 V6 H5" stroke="#8fb0e0" stroke-width="1.2"/><path d="M8.5 5 V8.7 L11 10.5" stroke="#8fb0e0" stroke-width="1.2"/></svg>
<div class="t" style="left:1030px;top:490px;font-size:10.8px;color:#8a8a8a">Histórico</div>
<div class="" style="left:157px;top:516px;width:954px;height:1px;background:#e2e2e2"></div>
<div class="btn gb" style="left:166px;top:527px;width:112px;height:22px"><svg width="16" height="16" viewBox="0 0 16 16" fill="none" style="position:static;flex:none"><circle cx="6.5" cy="6.5" r="5.5" stroke="#2f69c9" stroke-width="1.3"/><path d="M10.5 10.5 L15 15" stroke="#2f69c9" stroke-width="1.4"/></svg><span>Movto.financeiro</span></div>
<div class="btn gb" style="left:166px;top:549px;width:112px;height:22px"><svg width="16" height="16" viewBox="0 0 16 16" fill="none" style="position:static;flex:none"><circle cx="6.5" cy="6.5" r="5.5" stroke="#2f69c9" stroke-width="1.3"/><path d="M10.5 10.5 L15 15" stroke="#2f69c9" stroke-width="1.4"/></svg><span>Cotações venda</span></div>
<div class="btn gb" style="left:166px;top:571px;width:112px;height:22px"><svg width="16" height="16" viewBox="0 0 16 16" fill="none" style="position:static;flex:none"><circle cx="6.5" cy="6.5" r="5.5" stroke="#2f69c9" stroke-width="1.3"/><path d="M10.5 10.5 L15 15" stroke="#2f69c9" stroke-width="1.4"/></svg><span>Movto.Serviço</span></div>
<div class="btn gb" style="left:166px;top:593px;width:112px;height:22px"><svg width="16" height="16" viewBox="0 0 16 16" fill="none" style="position:static;flex:none"><path d="M4.3 0.9 H10 L14 4.9 V14 Q14 15.2 12.8 15.2 H4.3 Q3.1 15.2 3.1 14 V2.1 Q3.1 0.9 4.3 0.9 Z M10 0.9 V4.9 H14" stroke="#2f69c9" stroke-width="1.2" stroke-linejoin="round"/><path d="M5.2 3.4 H7.2 M5.2 5.7 H7.6" stroke="#2f69c9" stroke-width="1.1"/><path d="M10.4 8.4 Q9.9 7.7 8.7 7.7 Q7.1 7.7 7.1 8.9 Q7.1 9.9 8.7 10.2 Q10.5 10.5 10.5 11.7 Q10.5 12.9 8.7 12.9 Q7.4 12.9 6.9 12.1" stroke="#2f69c9" stroke-width="1.2"/></svg><span>Sugestão <u>P</u>ro.</span></div>
<div class="btn gb" style="left:283px;top:527px;width:112px;height:22px"><svg width="16" height="16" viewBox="0 0 16 16" fill="none" style="position:static;flex:none"><circle cx="6.5" cy="6.5" r="5.5" stroke="#2f69c9" stroke-width="1.3"/><path d="M10.5 10.5 L15 15" stroke="#2f69c9" stroke-width="1.4"/></svg><span><u>D</u>oc.em aberto</span></div>
<div class="btn gb" style="left:283px;top:571px;width:112px;height:22px"><svg width="16" height="16" viewBox="0 0 16 16" fill="none" style="position:static;flex:none"><circle cx="6.5" cy="6.5" r="5.5" stroke="#2f69c9" stroke-width="1.3"/><path d="M10.5 10.5 L15 15" stroke="#2f69c9" stroke-width="1.4"/></svg><span>Notas Automação</span></div>
<div class="btn gb" style="left:283px;top:593px;width:112px;height:22px"><svg width="16" height="16" viewBox="0 0 16 16" fill="none" style="position:static;flex:none"><rect x="2" y="3" width="12" height="12.5" rx="1.5" stroke="#2f69c9" stroke-width="1.2"/><path d="M5.5 3 V1 H10.5 V3" stroke="#2f69c9" stroke-width="1.2"/><path d="M4.5 7 H5.5 M7 7 H11.5 M4.5 10 H5.5 M7 10 H11.5 M4.5 13 H5.5 M7 13 H11.5" stroke="#2f69c9" stroke-width="1"/></svg><span>Protocolos</span></div>
<div class="btn gb" style="left:400px;top:527px;width:112px;height:22px"><svg width="16" height="16" viewBox="0 0 16 16" fill="none" style="position:static;flex:none"><path d="M5.3 1 H10.7 L9.2 4.2 C12.6 5.6 15 9 15 12 C15 14.2 13.4 15.3 11 15.3 H5 C2.6 15.3 1 14.2 1 12 C1 9 3.4 5.6 6.8 4.2 Z" stroke="#2f69c9" stroke-width="1.2" stroke-linejoin="round"/><path d="M6.6 4.2 H9.4" stroke="#2f69c9" stroke-width="1.1"/><path d="M10.1 7.9 Q9.6 7.2 8.3 7.2 Q6.7 7.2 6.7 8.5 Q6.7 9.5 8.3 9.8 Q10.1 10.1 10.1 11.3 Q10.1 12.6 8.3 12.6 Q7 12.6 6.5 11.8 M8.3 6.3 V13.4" stroke="#2f69c9" stroke-width="1.1"/></svg><span>Pos.financeira</span></div>
<div class="btn gb" style="left:400px;top:549px;width:112px;height:22px"><svg width="16" height="16" viewBox="0 0 16 16" fill="none" style="position:static;flex:none"><path d="M1.4 13.6 V3.2 Q1.4 2.1 3 2.1 Q4.6 2.1 4.6 3.2 V6.6 L8.6 4.6 L9.4 6.9 L14.6 4.6 V13.6 Q14.6 14.2 14 14.2 H2 Q1.4 14.2 1.4 13.6 Z" stroke="#2f69c9" stroke-width="1.2" stroke-linejoin="round"/></svg><span>Ordem produção</span></div>
<div class="btn gb" style="left:400px;top:571px;width:112px;height:22px"><svg width="16" height="16" viewBox="0 0 16 16" fill="none" style="position:static;flex:none"><circle cx="6.5" cy="6.5" r="5.5" stroke="#2f69c9" stroke-width="1.3"/><path d="M10.5 10.5 L15 15" stroke="#2f69c9" stroke-width="1.4"/></svg><span>Ordem serviço</span></div>
<div class="btn gb" style="left:400px;top:593px;width:112px;height:22px"><svg width="16" height="16" viewBox="0 0 16 16" fill="none" style="position:static;flex:none"><path d="M2 1 H9.5 L14 5.5 V15.5 H2 Z M9.5 1 V5.5 H14" stroke="#2f69c9" stroke-width="1.2" stroke-linejoin="round"/><path d="M4 12.5 C5 10 6 10 6.5 12 C7 13 8 11.5 9 12.5 H12" stroke="#2f69c9" stroke-width="1"/></svg><span>Contratos</span></div>
<div class="btn gb" style="left:517px;top:549px;width:112px;height:22px"><svg width="16" height="16" viewBox="0 0 16 16" fill="none" style="position:static;flex:none"><path d="M1 11.5 V8.5 L3 7.5 L4.8 4 H11.2 L13 7.5 L15 8.5 V11.5 Z M3 7.5 H13" stroke="#2f69c9" stroke-width="1.2" stroke-linejoin="round"/><circle cx="4.5" cy="11.8" r="1.6" stroke="#2f69c9" stroke-width="1.1" fill="#fff"/><circle cx="11.5" cy="11.8" r="1.6" stroke="#2f69c9" stroke-width="1.1" fill="#fff"/></svg><span>Visitas</span></div>
<div class="btn gb" style="left:517px;top:571px;width:112px;height:22px"><svg width="16" height="16" viewBox="0 0 16 16" fill="none" style="position:static;flex:none"><circle cx="8" cy="8" r="2.5" stroke="#2f69c9" stroke-width="1.2"/><path d="M6.8 0.8 H9.2 L9.6 2.6 L11.3 3.4 L12.9 2.4 L14.6 4.1 L13.6 5.7 L14.3 7.4 L16 7.8 V10.2 L14.3 10.6 L13.6 12.3 L14.6 13.9 L12.9 15.6 L11.3 14.6 L9.6 15.3 L9.2 17 H6.8 L6.4 15.3 L4.7 14.6 L3.1 15.6 L1.4 13.9 L2.4 12.3 L1.7 10.6 L0 10.2 V7.8 L1.7 7.4 L2.4 5.7 L1.4 4.1 L3.1 2.4 L4.7 3.4 L6.4 2.6 Z" stroke="#2f69c9" stroke-width="1.1" stroke-linejoin="round" transform="scale(0.94) translate(0.5,-0.4)"/></svg><span>Man.previstas</span></div>
<div class="btn gb" style="left:517px;top:593px;width:112px;height:22px"><svg width="16" height="16" viewBox="0 0 16 16" fill="none" style="position:static;flex:none"><rect x="2" y="3" width="12" height="12.5" rx="1.5" stroke="#2f69c9" stroke-width="1.2"/><path d="M5.5 3 V1 H10.5 V3" stroke="#2f69c9" stroke-width="1.2"/><path d="M4.8 9.5 L7.2 11.8 L11.5 7" stroke="#2f69c9" stroke-width="1.2"/></svg><span>Metas Avan.</span></div>
<div class="btn gb" style="left:634px;top:527px;width:112px;height:22px"><svg width="16" height="16" viewBox="0 0 16 16" fill="none" style="position:static;flex:none"><circle cx="6.5" cy="6.5" r="5.5" stroke="#2f69c9" stroke-width="1.3"/><path d="M10.5 10.5 L15 15" stroke="#2f69c9" stroke-width="1.4"/></svg><span>Vendas PDV</span></div>
<div class="btn gb" style="left:634px;top:549px;width:112px;height:22px"><svg width="16" height="16" viewBox="0 0 16 16" fill="none" style="position:static;flex:none"><path d="M4.3 0.9 H10 L14 4.9 V14 Q14 15.2 12.8 15.2 H4.3 Q3.1 15.2 3.1 14 V2.1 Q3.1 0.9 4.3 0.9 Z M10 0.9 V4.9 H14" stroke="#2f69c9" stroke-width="1.2" stroke-linejoin="round"/><path d="M5.2 3.4 H7.2 M5.2 5.7 H7.6" stroke="#2f69c9" stroke-width="1.1"/><path d="M10.4 8.4 Q9.9 7.7 8.7 7.7 Q7.1 7.7 7.1 8.9 Q7.1 9.9 8.7 10.2 Q10.5 10.5 10.5 11.7 Q10.5 12.9 8.7 12.9 Q7.4 12.9 6.9 12.1" stroke="#2f69c9" stroke-width="1.2"/></svg><span>Orç./Ret.</span></div>
<div class="btn gb" style="left:634px;top:571px;width:112px;height:22px"><svg width="16" height="16" viewBox="0 0 16 16" fill="none" style="position:static;flex:none"><circle cx="6.5" cy="6.5" r="5.5" stroke="#2f69c9" stroke-width="1.3"/><path d="M10.5 10.5 L15 15" stroke="#2f69c9" stroke-width="1.4"/></svg><span>End.Entrega</span></div>
<div class="btn gb" style="left:634px;top:593px;width:112px;height:22px"><svg width="16" height="16" viewBox="0 0 16 16" fill="none" style="position:static;flex:none"><path d="M4 1.5 H5.8 V3.7 M10.2 3.7 V1.5 H12" stroke="#2f69c9" stroke-width="1.2"/><path d="M3.6 3.9 H6.8 V14.2 Q6.8 15 6 15 H2 Q1.2 15 1.2 14.2 V10 Z M12.4 3.9 H9.2 V14.2 Q9.2 15 10 15 H14 Q14.8 15 14.8 14.2 V10 Z M6.8 7.5 H9.2" stroke="#2f69c9" stroke-width="1.2" stroke-linejoin="round"/></svg><span>Procurar campo</span></div>
<div class="btn gb" style="left:751px;top:549px;width:112px;height:22px"><svg width="16" height="16" viewBox="0 0 16 16" fill="none" style="position:static;flex:none"><path d="M4.3 0.9 H10 L14 4.9 V14 Q14 15.2 12.8 15.2 H4.3 Q3.1 15.2 3.1 14 V2.1 Q3.1 0.9 4.3 0.9 Z M10 0.9 V4.9 H14" stroke="#2f69c9" stroke-width="1.2" stroke-linejoin="round"/><path d="M5.2 3.4 H7.2 M5.2 5.7 H7.6" stroke="#2f69c9" stroke-width="1.1"/><path d="M10.4 8.4 Q9.9 7.7 8.7 7.7 Q7.1 7.7 7.1 8.9 Q7.1 9.9 8.7 10.2 Q10.5 10.5 10.5 11.7 Q10.5 12.9 8.7 12.9 Q7.4 12.9 6.9 12.1" stroke="#2f69c9" stroke-width="1.2"/></svg><span>Lista de preços</span></div>
<div class="btn gb" style="left:751px;top:571px;width:112px;height:22px"><svg width="16" height="16" viewBox="0 0 16 16" fill="none" style="position:static;flex:none"><circle cx="6.5" cy="6.5" r="5.5" stroke="#2f69c9" stroke-width="1.3"/><path d="M10.5 10.5 L15 15" stroke="#2f69c9" stroke-width="1.4"/></svg><span>PDPs vinculados</span></div>
<div class="btn gb" style="left:868px;top:549px;width:112px;height:22px"><svg width="16" height="16" viewBox="0 0 16 16" fill="none" style="position:static;flex:none"><path d="M8 2.5 H3 A1.8 1.8 0 0 0 1.2 4.3 V13.2 A1.8 1.8 0 0 0 3 15 H11.8 A1.8 1.8 0 0 0 13.6 13.2 V8.5" stroke="#2f69c9" stroke-width="1.3"/><path d="M6.5 10.3 L7 7.7 L13.2 1.5 A1.3 1.3 0 0 1 15.3 3.6 L9.1 9.8 Z" stroke="#2f69c9" stroke-width="1.3" stroke-linejoin="round"/></svg><span>Alt.cadastrais</span></div>
<div class="btn gb" style="left:985px;top:549px;width:112px;height:22px"><svg width="16" height="16" viewBox="0 0 16 16" fill="none" style="position:static;flex:none"><circle cx="6.5" cy="6.5" r="5.5" stroke="#2f69c9" stroke-width="1.3"/><path d="M10.5 10.5 L15 15" stroke="#2f69c9" stroke-width="1.4"/></svg><span>Movto.Livros</span></div>
<div class="btn gb" style="left:283px;top:549px;width:99px;height:22px"><svg width="16" height="16" viewBox="0 0 16 16" fill="none" style="position:static;flex:none"><path d="M2.5 1 H13.5 V13 H4 A1.5 1.5 0 0 0 2.5 14.5 Z M2.5 14.5 A1.5 1.5 0 0 0 4 16 H13.5 V13" stroke="#2f69c9" stroke-width="1.2" stroke-linejoin="round"/><path d="M5.5 1 V13 M7.5 4 H11 M7.5 6.5 H11 M7.5 9 H11" stroke="#2f69c9" stroke-width="1.1"/></svg><span>A<u>g</u>enda</span></div>
<div class="btn" style="left:382px;top:549px;width:13px;height:22px"></div>
<svg class="ic" style="left:386px;top:559px;" width="5" height="3" viewBox="0 0 5 3" fill="none"><path d="M0.3 0.3 L2.5 2.6 L4.7 0.3 Z" fill="#6f8fc8"/></svg>
<div class="btn gb" style="left:517px;top:527px;width:99px;height:22px"><svg width="16" height="16" viewBox="0 0 16 16" fill="none" style="position:static;flex:none"><path d="M0.5 1.5 H3 L5 10.5 H13.5 L15 4 H3.8" stroke="#2f69c9" stroke-width="1.2" stroke-linejoin="round"/><circle cx="6" cy="13.5" r="1.3" stroke="#2f69c9" stroke-width="1.1"/><circle cx="12" cy="13.5" r="1.3" stroke="#2f69c9" stroke-width="1.1"/></svg><span>Últ.v<u>e</u>ndas</span></div>
<div class="btn" style="left:616px;top:527px;width:13px;height:22px"></div>
<svg class="ic" style="left:620px;top:537px;" width="5" height="3" viewBox="0 0 5 3" fill="none"><path d="M0.3 0.3 L2.5 2.6 L4.7 0.3 Z" fill="#6f8fc8"/></svg>
<div class="btn gb" style="left:751px;top:527px;width:99px;height:22px"><svg width="16" height="16" viewBox="0 0 16 16" fill="none" style="position:static;flex:none"><circle cx="6.5" cy="6.5" r="5.5" stroke="#2f69c9" stroke-width="1.3"/><path d="M10.5 10.5 L15 15" stroke="#2f69c9" stroke-width="1.4"/></svg><span>NF ben/rem.</span></div>
<div class="btn" style="left:850px;top:527px;width:13px;height:22px"></div>
<svg class="ic" style="left:854px;top:537px;" width="5" height="3" viewBox="0 0 5 3" fill="none"><path d="M0.3 0.3 L2.5 2.6 L4.7 0.3 Z" fill="#6f8fc8"/></svg>
<div class="btn gb" style="left:985px;top:527px;width:99px;height:22px"><svg width="16" height="16" viewBox="0 0 16 16" fill="none" style="position:static;flex:none"><path d="M2.6 9 A6 6 0 1 1 13.2 10.2 Q12.5 11.6 9.5 11.6" stroke="#2f69c9" stroke-width="1.2"/><circle cx="8" cy="7.3" r="3.6" stroke="#2f69c9" stroke-width="1.2"/><circle cx="8.6" cy="11.3" r="1" fill="#2f69c9"/><path d="M1.5 15.3 L2.6 13.2 Q3.2 12.6 4.2 12.6 H11.8 Q12.8 12.6 13.4 13.2 L14.5 15.3 Z" stroke="#2f69c9" stroke-width="1.2" stroke-linejoin="round"/></svg><span>Televendas</span></div>
<div class="btn" style="left:1084px;top:527px;width:13px;height:22px"></div>
<svg class="ic" style="left:1088px;top:537px;" width="5" height="3" viewBox="0 0 5 3" fill="none"><path d="M0.3 0.3 L2.5 2.6 L4.7 0.3 Z" fill="#6f8fc8"/></svg>
<div class="btn gb btng" style="left:868px;top:527px;width:112px;height:22px"><svg width="16" height="16" viewBox="0 0 16 16" fill="none" style="position:static;flex:none"><path d="M0.5 1.5 H3 L5 10.5 H13.5 L15 4 H3.8" stroke="#9fbbe6" stroke-width="1.2" stroke-linejoin="round"/><circle cx="6" cy="13.5" r="1.3" stroke="#9fbbe6" stroke-width="1.1"/><circle cx="12" cy="13.5" r="1.3" stroke="#9fbbe6" stroke-width="1.1"/></svg><span>Últimas compras</span></div>
<div class="" style="left:895px;top:593px;width:99px;height:40px;border:1px solid #c6c6c6;border-radius:3px;background:#fff"></div>
<svg class="ic" style="left:915px;top:606px;" width="14" height="14" viewBox="0 0 14 14" fill="none"><path d="M0.5 0.5 L13.5 13.5 M13.5 0.5 L0.5 13.5" stroke="#2f69c9" stroke-width="1.3"/></svg>
<div class="t" style="left:932.5px;top:608.3px;font-size:10.9px;color:#1e1e1e">Cancelar</div>
<div class="" style="left:1003px;top:593px;width:99px;height:40px;background:#1b6adc;border-radius:2px;border:1px solid #3d7fe0"></div>
<div class="t" style="left:1022px;top:601px;font-size:11.2px;color:#fff"><u>A</u>vançar</div>
<div class="t" style="left:1012px;top:614px;font-size:11.2px;color:#fff">(page down)</div>
<svg class="ic" style="left:1081px;top:607px;" width="7" height="13" viewBox="0 0 7 13" fill="none"><path d="M0.5 0.5 L6.5 6.5 L0.5 12.5" stroke="#fff" stroke-width="1.2"/></svg></body></html>
